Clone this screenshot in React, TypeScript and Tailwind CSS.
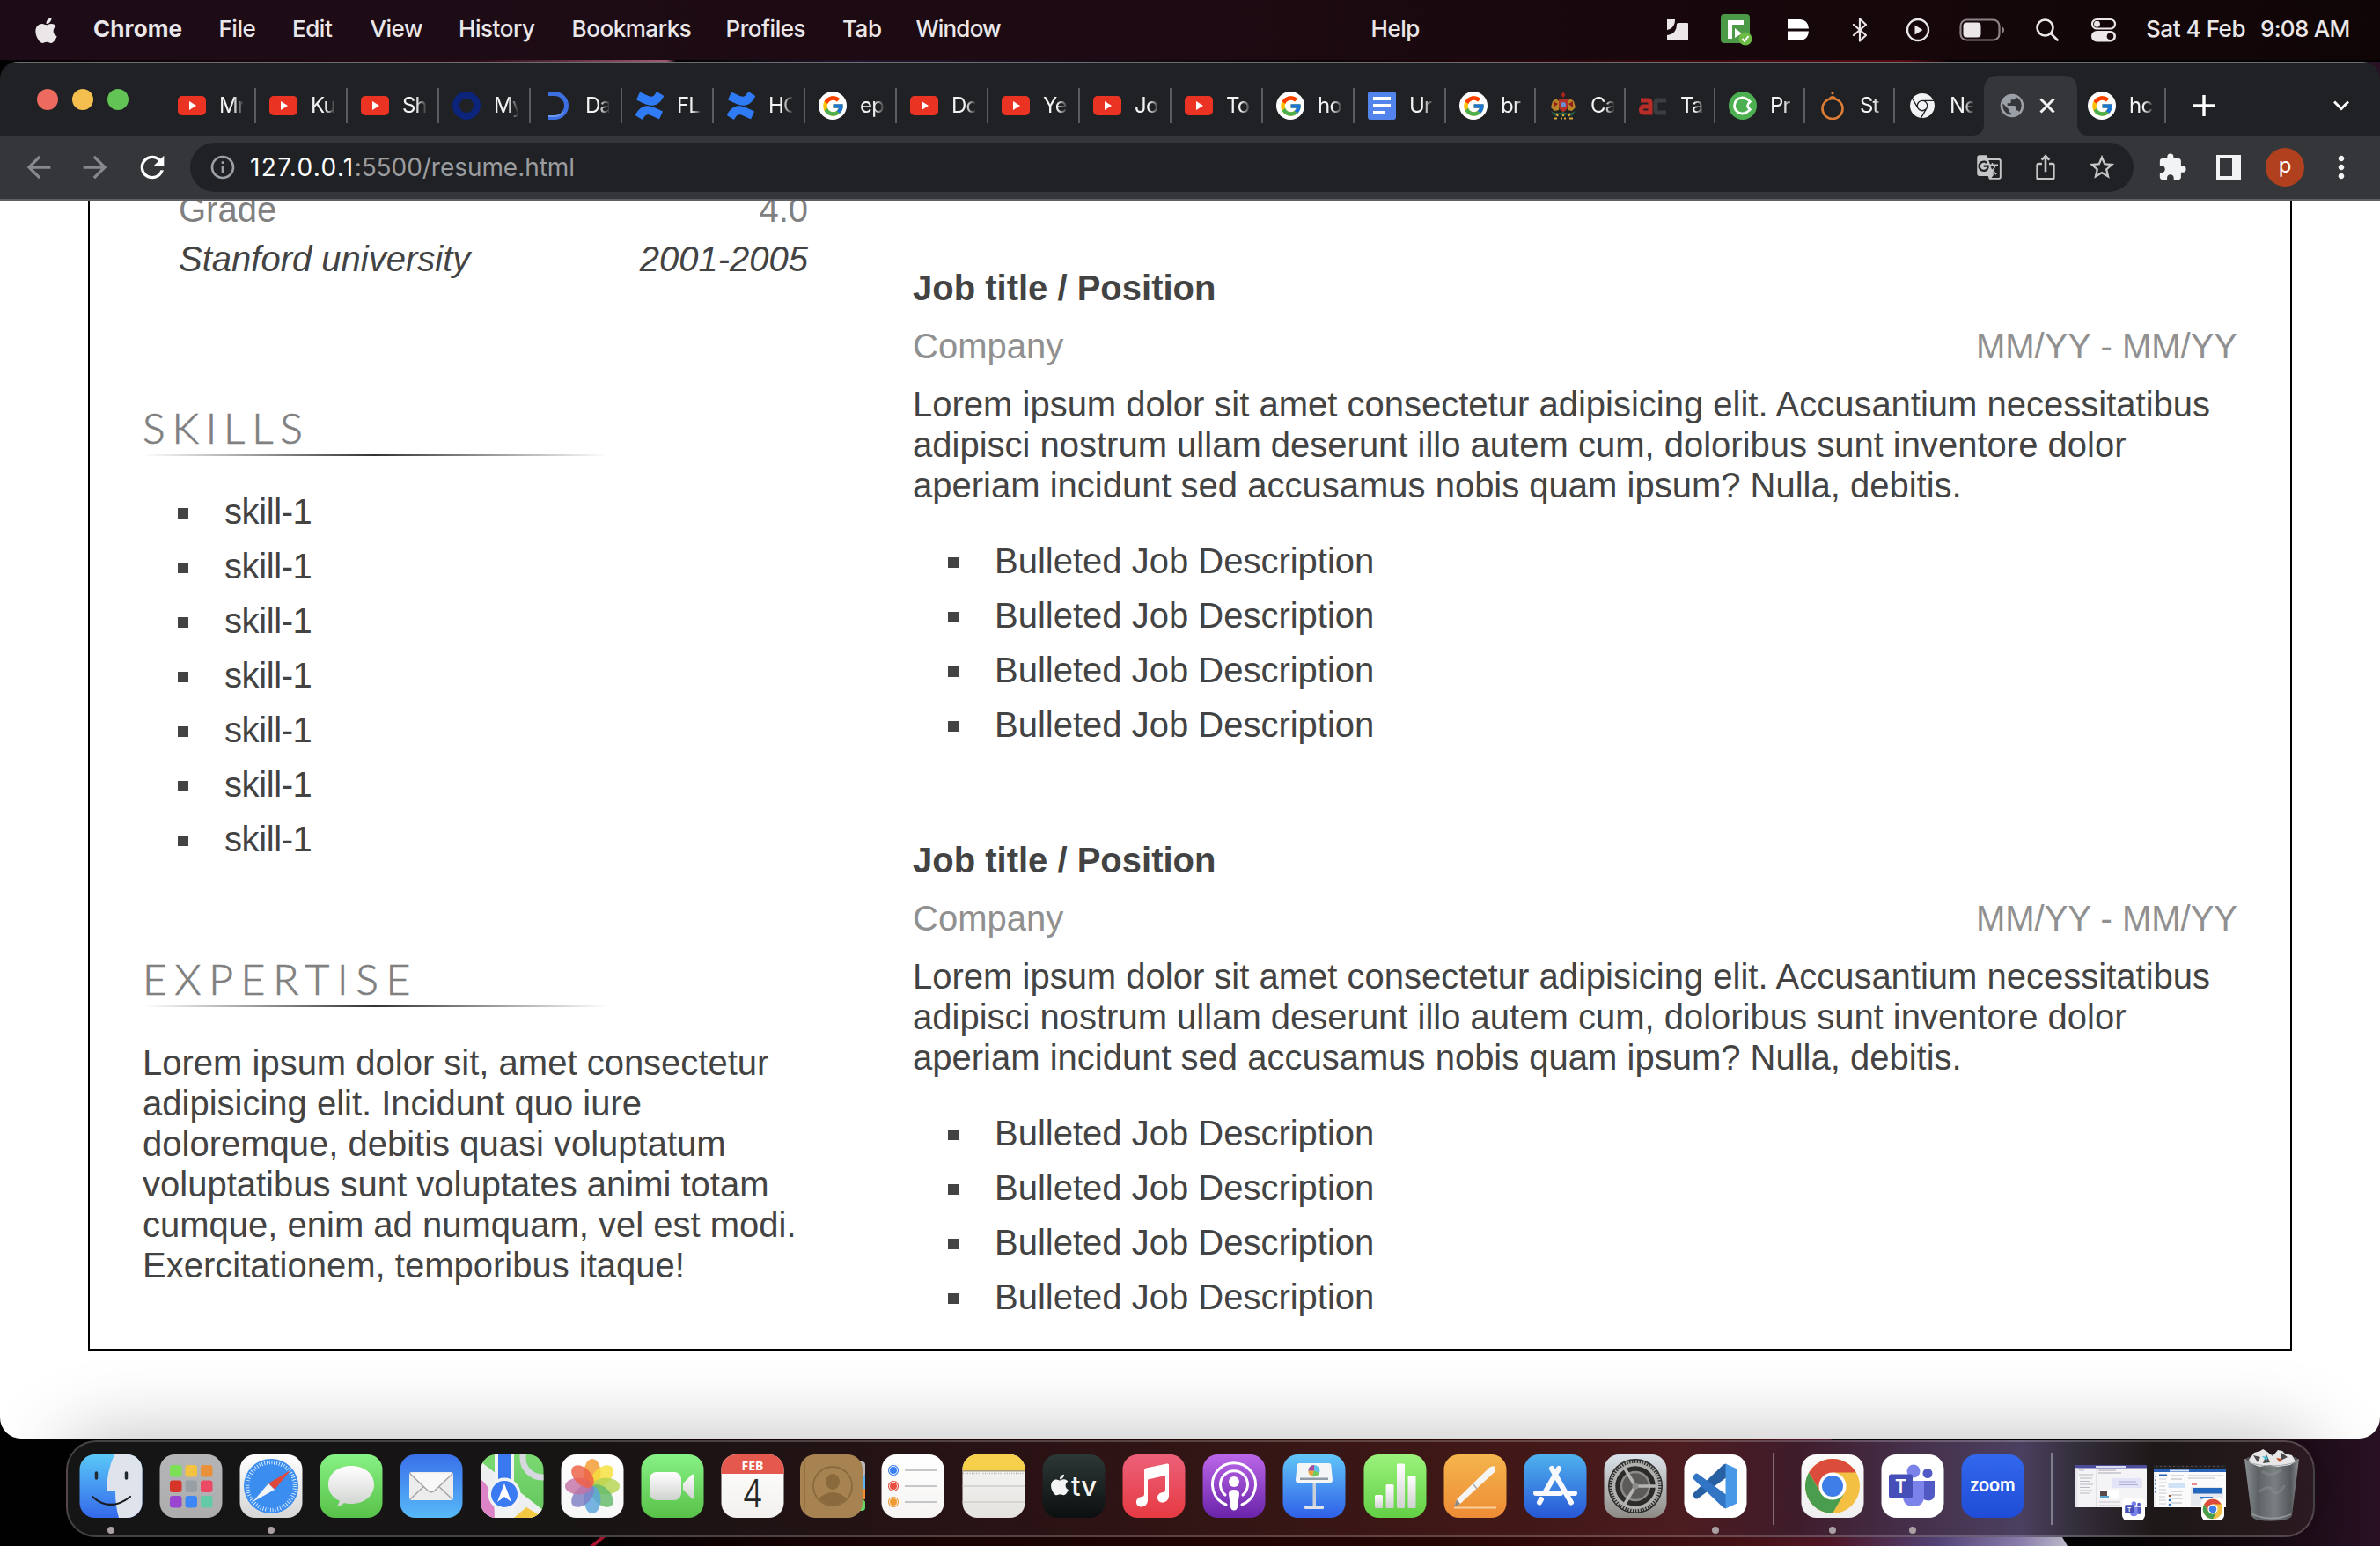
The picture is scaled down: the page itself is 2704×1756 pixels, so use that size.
import React from "react";
import { FaApple } from "react-icons/fa";
import { FcGoogle } from "react-icons/fc";
import { SiConfluence, SiGooglechrome } from "react-icons/si";
import {
  MdArrowBack,
  MdArrowForward,
  MdRefresh,
  MdInfoOutline,
  MdGTranslate,
  MdIosShare,
  MdStarBorder,
  MdExtension,
  MdMoreVert,
  MdPublic,
} from "react-icons/md";

/* ---------------------------------------------------------------- menu bar */

const menus = [
  { label: "File", cls: "w-[41px]" },
  { label: "Edit", cls: "w-[46px]" },
  { label: "View", cls: "w-[58px]" },
  { label: "History", cls: "w-[86px]" },
  { label: "Bookmarks", cls: "w-[132.5px]" },
  { label: "Profiles", cls: "w-[90px]" },
  { label: "Tab", cls: "w-[41px]" },
  { label: "Window", cls: "w-[96px] tracking-[-0.8px]" },
];

function MenuBar() {
  return (
    <div className="flex h-[68px] shrink-0 items-center bg-linear-to-r from-[#1d0c17] via-[#1d0a12] to-[#100506] font-['Inter'] text-[26px] font-medium tracking-[-0.45px] whitespace-nowrap text-[#ebe7e9]">
      <FaApple className="ml-[36px] h-[33px] w-[33px] shrink-0" />
      <div className="flex gap-[42.5px] pb-[3px]">
        <span className="ml-[37px] w-[100px] font-bold tracking-[0.1px]">Chrome</span>
        {menus.map((m) => (
          <span key={m.label} className={m.cls}>
            {m.label}
          </span>
        ))}
      </div>
      <span className="ml-[421px] pb-[3px]">Help</span>
      <div className="ml-auto flex items-center pr-[33px]">
        <svg className="mr-[36px] h-[26px] w-[26px]" viewBox="0 0 26 26" fill="#ebe7e9">
          <path d="M1 1h9q0 6-3 9-3 3-6 3zM12 6q1-1 3-1h9q1 0 1 1v18q0 1-1 1H2q-1 0-1-1v-5q7-1 9-5 2-3 2-8z" />
        </svg>
        <svg className="mr-[39px] h-[36px] w-[36px]" viewBox="0 0 36 36">
          <rect x="0" y="0" width="33" height="33" rx="4" fill="#4c9a48" />
          <path d="M8 28V7h18v5H13v16z" fill="#fff" />
          <path d="M16 16l8 6-8 5z" fill="#fff" />
          <circle cx="28" cy="28" r="7.5" fill="#6dbb45" />
          <path d="M24.500 28l2.500 3 4.500-6" stroke="#fff" strokeWidth="2" fill="none" />
        </svg>
        <svg className="mr-[46px] h-[26px] w-[26px]" viewBox="0 0 26 26" fill="#fff">
          <path d="M1 1h14q9 0 10 10.500H1zM1 14.500h24Q24 25 15 25H1z" />
        </svg>
        <svg className="mr-[41px] h-[28px] w-[22px]" viewBox="0 0 22 28" fill="none" stroke="#ebe7e9" strokeWidth="2.200" strokeLinejoin="round" strokeLinecap="round">
          <path d="M4 8l14 12-7 6.500v-25L18 8 4 20" />
        </svg>
        <svg className="mr-[33px] h-[28px] w-[28px]" viewBox="0 0 28 28">
          <circle cx="14" cy="14" r="12" fill="none" stroke="#ebe7e9" strokeWidth="2.400" />
          <path d="M10.500 8.500l9 5.500-9 5.500z" fill="#ebe7e9" />
        </svg>
        <svg className="mr-[34px] h-[26px] w-[52px]" viewBox="0 0 52 26">
          <rect x="1.500" y="1.500" width="44" height="23" rx="7" fill="none" stroke="#8d8286" strokeWidth="2.200" />
          <rect x="4.500" y="4.500" width="20" height="17" rx="4" fill="#ebe7e9" />
          <path d="M48 9v8q3-1 3-4t-3-4z" fill="#8d8286" />
        </svg>
        <svg className="mr-[35px] h-[28px] w-[28px]" viewBox="0 0 28 28" fill="none" stroke="#ebe7e9" strokeWidth="2.600" strokeLinecap="round">
          <circle cx="11.500" cy="11.500" r="9" />
          <path d="M18 18l7.500 7.500" />
        </svg>
        <svg className="mr-[33px] h-[28px] w-[30px]" viewBox="0 0 30 28">
          <rect x="2" y="2" width="26" height="10.500" rx="5.250" fill="none" stroke="#ebe7e9" strokeWidth="2.200" />
          <circle cx="7.500" cy="7.250" r="3.400" fill="#ebe7e9" />
          <rect x="1" y="15" width="28" height="12.500" rx="6.250" fill="#ebe7e9" />
          <circle cx="22.500" cy="21.250" r="3.800" fill="#1a070c" />
        </svg>
        <div className="flex pb-[3px]">
          <span className="w-[130px]">Sat 4 Feb</span>
          <span className="w-[103px] tracking-[-0.7px]">9:08 AM</span>
        </div>
      </div>
    </div>
  );
}

/* -------------------------------------------------------------- favicons */

function YouTube() {
  return (
    <svg className="h-8 w-8" viewBox="0 0 32 32">
      <rect x="0" y="5" width="32" height="22" rx="5" fill="#ea3323" />
      <path d="M13 11l8 5-8 5z" fill="#fff" />
    </svg>
  );
}
function Google() {
  return (
    <span className="flex h-8 w-8 items-center justify-center rounded-full bg-white">
      <FcGoogle className="h-[27px] w-[27px]" />
    </span>
  );
}
function Confluence() {
  return <SiConfluence className="h-8 w-8 text-[#2f7bf5]" />;
}
function Docs() {
  return (
    <svg className="h-8 w-8" viewBox="0 0 32 32">
      <rect width="32" height="32" rx="3" fill="#5384ec" />
      <path d="M6 6h20v4H6zM6 14h20v4H6zM6 22h13v4H6z" fill="#fff" />
    </svg>
  );
}
function BlueRing() {
  return (
    <svg className="h-8 w-8" viewBox="0 0 32 32">
      <circle cx="16" cy="16" r="12" fill="none" stroke="#0c2479" strokeWidth="8" />
    </svg>
  );
}
function BlueD() {
  return (
    <svg className="h-8 w-8" viewBox="0 0 32 32" fill="none">
      <path d="M5 2.500h7a13.500 13.500 0 0 1 0 27H5" stroke="#3e6fe0" strokeWidth="5" />
      <path d="M5 28h7a12 12 0 0 0 10-5" stroke="#6b9af2" strokeWidth="2" />
    </svg>
  );
}
function Crest() {
  return (
    <svg className="h-8 w-8" viewBox="0 0 32 32">
      <path d="M16 0l2.500 4-2.500 3-2.500-3z" fill="#a3251d" />
      <path d="M4 11l4-3 4 4-1 9-5 1-4-4z" fill="#b98427" />
      <path d="M28 11l-4-3-4 4 1 9 5 1 4-4z" fill="#b98427" />
      <path d="M5 11l5 3-5 4zM27 11l-5 3 5 4z" fill="#8f2019" />
      <path d="M11 8h10v9q-1 5-5 6-4-1-5-6z" fill="#b3312a" />
      <circle cx="16" cy="15" r="3" fill="#6a8fd0" />
      <path d="M2 22q6 4 14 1 8 3 14-1l-3 5-4 1-3-2-4 3-4-3-3 2-4-1z" fill="#27583f" />
      <path d="M8 25l2 3M16 25v3M24 25l-2 3M5 30.500h4M13 30.500h2M17 30.500h2M23 30.500h4" stroke="#d9a83a" strokeWidth="2" />
    </svg>
  );
}
function AcLogo() {
  return (
    <svg className="h-8 w-8" viewBox="0 0 32 32" fill="none" strokeWidth="5">
      <path d="M2 10h8q3 0 3 3v11H5q-2.500 0-2.500-3.200T5 17h7" stroke="#b92d29" />
      <path d="M31 10h-9q-3 0-3 3v8q0 3 3 3h9" stroke="#3c3d40" />
    </svg>
  );
}
function GreenC() {
  return (
    <svg className="h-8 w-8" viewBox="0 0 32 32">
      <circle cx="16" cy="16" r="16" fill="#4caf50" />
      <path d="M20.500 8.500A9 9 0 1 0 20.500 23.500L24.500 20.500Q18.500 16 24.500 11.500Z" fill="none" stroke="#fff" strokeWidth="2.800" strokeLinejoin="round" />
    </svg>
  );
}
function OrangeRing() {
  return (
    <svg className="h-8 w-8" viewBox="0 0 32 32" fill="none" stroke="#dd7d35">
      <circle cx="16" cy="19.500" r="11.500" strokeWidth="2.600" />
      <path d="M12.500 8q3.500-4 7 0" strokeWidth="2" />
      <circle cx="16" cy="1.800" r="1.600" fill="#dd7d35" stroke="none" />
    </svg>
  );
}
function ChromeMono() {
  return (
    <span className="flex h-8 w-8 items-center justify-center">
      <SiGooglechrome className="h-7 w-7 text-[#f1f3f4]" />
    </span>
  );
}

const tabs: { icon: () => React.ReactElement; text: string }[] = [
  { icon: YouTube, text: "Mr" },
  { icon: YouTube, text: "Ku" },
  { icon: YouTube, text: "Sh" },
  { icon: BlueRing, text: "My" },
  { icon: BlueD, text: "Da" },
  { icon: Confluence, text: "FL" },
  { icon: Confluence, text: "HC" },
  { icon: Google, text: "ep" },
  { icon: YouTube, text: "Dc" },
  { icon: YouTube, text: "Ye" },
  { icon: YouTube, text: "Jo" },
  { icon: YouTube, text: "To" },
  { icon: Google, text: "ho" },
  { icon: Docs, text: "Ur" },
  { icon: Google, text: "br" },
  { icon: Crest, text: "Ca" },
  { icon: AcLogo, text: "Ta" },
  { icon: GreenC, text: "Pr" },
  { icon: OrangeRing, text: "St" },
  { icon: ChromeMono, text: "Ne" },
];

function TabItem({ icon: Icon, text, width, line }: { icon: () => React.ReactElement; text: string; width: string; line: boolean }) {
  return (
    <div className={"flex h-full shrink-0 items-center " + width}>
      <span className="ml-[15px] shrink-0">
        <Icon />
      </span>
      <span className="ml-[15px] w-[27px] overflow-hidden mask-r-from-60% mask-r-to-105% text-[24px] leading-[34px] tracking-[-0.8px] text-[#f1f3f4]">{text}</span>
      <span className={line ? "ml-auto h-10 w-[2px] bg-[#5b5c5f]" : "ml-auto"} />
    </div>
  );
}

function TabStrip() {
  return (
    <div className="flex h-[84px] items-end border-t-2 border-[#6c6d6f] bg-[#202124] font-['Inter']">
      <div className="flex h-[68px] w-full items-center">
        <div className="mb-[14px] ml-[42px] flex w-[145px] shrink-0 gap-4">
          <span className="h-6 w-6 rounded-full bg-[#ec6a5e]" />
          <span className="h-6 w-6 rounded-full bg-[#f4bf4f]" />
          <span className="h-6 w-6 rounded-full bg-[#61c454]" />
        </div>
        {tabs.map((t, i) => (
          <TabItem key={i} icon={t.icon} text={t.text} width={i < 14 ? "w-[104px]" : "w-[102px]"} line={i < 19} />
        ))}
        <div className="relative flex h-full w-[102px] shrink-0 items-center">
          <svg className="absolute top-0 -left-[15px] h-[68px] w-[134px]" viewBox="0 0 134 68">
            <path d="M0 68q14 0 14-14V16Q14 0 30 0h74q16 0 16 16v38q0 14 14 14z" fill="#35363a" />
          </svg>
          <MdPublic className="relative ml-[15px] h-8 w-8 text-[#9aa0a6]" />
          <svg className="relative ml-[15px] h-[18px] w-[18px]" viewBox="0 0 18 18" stroke="#f1f3f4" strokeWidth="3">
            <path d="M1.500 1.500l15 15M16.500 1.500l-15 15" />
          </svg>
        </div>
        <TabItem icon={Google} text="hc" width="w-[104px]" line />
        <svg className="ml-[30px] h-[26px] w-[26px] shrink-0" viewBox="0 0 26 26" stroke="#fff" strokeWidth="3.400">
          <path d="M13 1v24M1 13h24" />
        </svg>
        <svg className="mr-[35px] ml-auto h-[12px] w-[18px] shrink-0" viewBox="0 0 18 12" fill="none" stroke="#fff" strokeWidth="3">
          <path d="M1 1.500l8 8 8-8" />
        </svg>
      </div>
    </div>
  );
}

function Toolbar() {
  return (
    <div className="flex h-[74px] items-center border-b-2 border-[#5f6063] bg-[#35363a] font-['Inter']">
      <MdArrowBack className="ml-[24px] h-10 w-10 text-[#87898c]" />
      <MdArrowForward className="ml-[24px] h-10 w-10 text-[#87898c]" />
      <MdRefresh className="ml-[25px] h-10 w-10 text-white" />
      <div className="ml-[23px] flex h-14 w-[2208px] items-center rounded-full bg-[#202124] text-[28px]">
        <MdInfoOutline className="ml-[21px] h-8 w-8 text-[#9aa0a6]" />
        <span className="ml-[15px] tracking-[1.35px] text-white">127.0.0.1</span>
        <span className="tracking-[-0.05px] text-[#9a9c9f]">:5500/resume.html</span>
        <MdGTranslate className="ml-auto h-[30px] w-[30px] text-[#c4c6c8]" />
        <MdIosShare className="ml-[33px] h-[32px] w-[32px] text-[#c4c6c8]" />
        <MdStarBorder className="mr-[19px] ml-[31px] h-[34px] w-[34px] text-[#c4c6c8]" />
      </div>
      <MdExtension className="ml-[27px] h-[34px] w-[34px] text-[#f1f3f4]" />
      <svg className="ml-[33px] h-7 w-7" viewBox="0 0 28 28">
        <path fillRule="evenodd" d="M0 0h28v28H0zM4 4v20h14V4z" fill="#f1f3f4" />
      </svg>
      <span className="ml-7 flex h-11 w-11 items-center justify-center rounded-full bg-[#b0401e] pb-1 text-[24px] text-white">p</span>
      <MdMoreVert className="ml-[22px] h-10 w-10 text-[#f1f3f4]" />
    </div>
  );
}

/* ---------------------------------------------------------------- resume */

function Heading({ children, tracking }: { children: string; tracking: string }) {
  return (
    <div className="w-[528px]">
      <h2
        className={
          "h-[58px] font-['Lato'] text-[48px] leading-[55px] font-light text-[#808080] [-webkit-text-stroke:0.7px_#808080] " + tracking
        }
      >
        {children}
      </h2>
      <div className="h-[2px] bg-linear-to-r from-transparent via-[#333] to-transparent" />
    </div>
  );
}

function Bullets({ items, className }: { items: string[]; className: string }) {
  return (
    <ul className={"flex flex-col gap-4 " + className}>
      {items.map((item, i) => (
        <li key={i} className="flex items-center">
          <span className="mt-[3px] mr-[41px] h-3 w-3 bg-[#434343]" />
          {item}
        </li>
      ))}
    </ul>
  );
}

function Job({ className }: { className: string }) {
  return (
    <section className={className}>
      <h3 className="font-bold">Job title / Position</h3>
      <div className="mt-5 flex justify-between text-[#909090]">
        <span>Company</span>
        <span>MM/YY - MM/YY</span>
      </div>
      <p className="mt-5 whitespace-nowrap">
        Lorem ipsum dolor sit amet consectetur adipisicing elit. Accusantium necessitatibus
        <br />
        adipisci nostrum ullam deserunt illo autem cum, doloribus sunt inventore dolor
        <br />
        aperiam incidunt sed accusamus nobis quam ipsum? Nulla, debitis.
      </p>
      <Bullets
        className="mt-10 pl-[40px]"
        items={["Bulleted Job Description", "Bulleted Job Description", "Bulleted Job Description", "Bulleted Job Description"]}
      />
    </section>
  );
}

function Resume() {
  return (
    <div className="h-[1406px] overflow-hidden bg-white">
      <div className="mx-[100px] flex h-[1306px] justify-between border-x-2 border-b-2 border-black pr-[60px] pl-[60px] font-['Liberation_Sans'] text-[40px] leading-[46px] text-[#434343]">
        <div className="w-[760px]">
          <div className="-mt-[13px] ml-[41px] flex w-[715px] flex-col gap-[10px]">
            <div className="flex justify-between text-[#808080]">
              <span>Grade</span>
              <span>4.0</span>
            </div>
            <div className="flex justify-between italic">
              <span>Stanford university</span>
              <span>2001-2005</span>
            </div>
          </div>
          <div className="mt-[141px]">
            <Heading tracking="tracking-[7.800px]">SKILLS</Heading>
          </div>
          <Bullets
            className="mt-10 pl-[40px] tracking-[-0.400px]"
            items={["skill-1", "skill-1", "skill-1", "skill-1", "skill-1", "skill-1", "skill-1"]}
          />
          <div className="mt-[108px]">
            <Heading tracking="tracking-[8.700px]">EXPERTISE</Heading>
          </div>
          <p className="mt-10 whitespace-nowrap">
            Lorem ipsum dolor sit, amet consectetur
            <br />
            adipisicing elit. Incidunt quo iure
            <br />
            doloremque, debitis quasi voluptatum
            <br />
            voluptatibus sunt voluptates animi totam
            <br />
            cumque, enim ad numquam, vel est modi.
            <br />
            Exercitationem, temporibus itaque!
          </p>
        </div>
        <div className="w-[1505px]">
          <Job className="mt-[76px]" />
          <Job className="mt-[108px]" />
        </div>
      </div>
    </div>
  );
}

/* ------------------------------------------------------------------ dock */

function Tile({ from, to, id, children }: { from: string; to: string; id: string; children?: React.ReactNode }) {
  return (
    <svg className="h-[72px] w-[72px]" viewBox="0 0 72 72">
      <defs>
        <linearGradient id={id} x1="0" y1="0" x2="0" y2="1">
          <stop offset="0" stopColor={from} />
          <stop offset="1" stopColor={to} />
        </linearGradient>
        <clipPath id={id + "-clip"}>
          <rect x="0.500" y="0" width="71" height="72" rx="17" />
        </clipPath>
        <linearGradient id={id + "-hi"} x1="0" y1="0" x2="0" y2="1">
          <stop offset="0" stopColor="#fff" />
          <stop offset="1" stopColor="#cfd2cf" />
        </linearGradient>
      </defs>
      <g clipPath={"url(#" + id + "-clip)"}>
        <rect width="72" height="72" fill={"url(#" + id + ")"} />
        {children}
      </g>
    </svg>
  );
}

function Finder() {
  return (
    <Tile id="finder" from="#5ac8f8" to="#3468ea">
      <path d="M40 0Q31 20 31 42h10q0 16 4 30h27V0z" fill="#dfe4ec" />
      <path d="M19.500 21v6M53.500 21v6" stroke="#1f2a33" strokeWidth="3.500" strokeLinecap="round" />
      <path d="M15 48q20 18 43 0" stroke="#1b1b1f" strokeWidth="2.200" fill="none" strokeLinecap="round" />
    </Tile>
  );
}
function Launchpad() {
  const c = ["#7be055", "#f3c23f", "#e8903a", "#d8352a", "#98a0a5", "#ec4a64", "#9a45cf", "#3c86f5", "#63c9a6"];
  return (
    <Tile id="launch" from="#b4b5b7" to="#adadae">
      {c.map((f, i) => (
        <rect key={i} x={12 + (i % 3) * 17.5} y={12 + Math.floor(i / 3) * 17.5} width="13.500" height="13.500" rx="3" fill={f} />
      ))}
    </Tile>
  );
}
function Safari() {
  return (
    <Tile id="safari" from="#ffffff" to="#d6d6d6">
      <circle cx="36" cy="36" r="31" fill="#3b8df0" />
      <circle cx="36" cy="36" r="27" fill="none" stroke="#e4f1fd" strokeWidth="4.500" strokeDasharray="0.900 1.930" />
      <path d="M58 18L40 40l-7-7z" fill="#e0483c" />
      <path d="M15 54l18-21 7 7z" fill="#f3f5f7" />
    </Tile>
  );
}
function Messages() {
  return (
    <Tile id="msg" from="#87f285" to="#58c148">
      <path d="M36 13c15 0 26 9 26 21.500S51 56 36 56c-3 0-6-.4-8-1-2 2-5 4-9 4.500 2-2 3.500-4 3.500-7C14 48.500 10 42 10 34.500 10 22 21 13 36 13z" fill="url(#msg-hi)" />
    </Tile>
  );
}
function Mail() {
  return (
    <Tile id="mail" from="#3a70ea" to="#57b9f8">
      <rect x="11" y="20" width="50" height="32" rx="3" fill="#ececec" />
      <path d="M12 51l18-17M60 51L42 34" stroke="#a5a5a5" strokeWidth="1.500" />
      <path d="M11.500 21.500L32 41q4 3.500 8 0l20.500-19.500" fill="#f8f8f8" stroke="#a5a5a5" strokeWidth="1.500" />
    </Tile>
  );
}
function Maps() {
  return (
    <Tile id="maps" from="#7bd972" to="#62c65c">
      <path d="M0 8l72 56v8H0z" fill="#eeeff1" />
      <path d="M0 28q16 12 16 44H0z" fill="#dc84c6" />
      <path d="M72 72H38l14-12z" fill="#f3c843" />
      <circle cx="70" cy="4" r="22" fill="none" stroke="#d7d8df" strokeWidth="7" />
      <path d="M16 0h22v72H16z" fill="#f1f2f4" />
      <path d="M20 0h15v36H20z" fill="#3a78ef" />
      <circle cx="27" cy="45" r="18.500" fill="#f1f2f4" />
      <circle cx="27" cy="45" r="15" fill="#3a7af2" />
      <path d="M27 33l8 21-8-6-8 6z" fill="#fff" />
    </Tile>
  );
}
function Photos() {
  const c = ["#f39a2f", "#f5de3c", "#b4d450", "#63b96a", "#5aa3dc", "#7f7fc4", "#c271a6", "#ee5f44"];
  return (
    <Tile id="photos" from="#ffffff" to="#f6f6f6">
      {c.map((f, i) => (
        <ellipse key={i} cx="36" cy="20.500" rx="9.500" ry="15.500" fill={f} opacity="0.820" transform={"rotate(" + i * 45 + " 36 36)"} />
      ))}
    </Tile>
  );
}
function FaceTime() {
  return (
    <Tile id="ft" from="#87f285" to="#58c148">
      <rect x="10" y="20" width="36" height="32" rx="8" fill="url(#ft-hi)" />
      <path d="M48 33l10-10q2-1.500 2 1v25q0 2.500-2 1L48 40z" fill="url(#ft-hi)" />
    </Tile>
  );
}
function Calendar() {
  return (
    <Tile id="cal" from="#ffffff" to="#f2f1ee">
      <rect width="72" height="22" fill="#e4584d" />
      <text x="36" y="17.500" textAnchor="middle" fontFamily="Noto Sans" fontWeight="700" fontSize="14" fill="#fff">
        FEB
      </text>
      <text x="36" y="60" textAnchor="middle" fontFamily="Inter" fontWeight="300" fontSize="43" textLength="24" lengthAdjust="spacingAndGlyphs" fill="#262626">
        4
      </text>
    </Tile>
  );
}
function Contacts() {
  return (
    <svg className="h-[72px] w-[76px]" viewBox="0 0 76 72">
      <rect x="60" y="8" width="15" height="18" rx="4" fill="#b9b9bb" />
      <rect x="60" y="25" width="15" height="14" fill="#5ab3f5" />
      <rect x="60" y="39" width="15" height="12" fill="#f08f2c" />
      <rect x="60" y="51" width="15" height="13" rx="4" fill="#67d766" />
      <rect x="1" y="0" width="71" height="72" rx="17" fill="#a78351" />
      <path d="M6 8v56" stroke="#8e6d40" strokeWidth="1.500" />
      <circle cx="38" cy="36" r="22" fill="none" stroke="#8a6a3d" strokeWidth="1.800" />
      <ellipse cx="38" cy="31" rx="8" ry="9" fill="#8a6a3d" />
      <path d="M22 50q16-14 32 0-16 15-32 0z" fill="#8a6a3d" />
    </svg>
  );
}
function Reminders() {
  return (
    <Tile id="rem" from="#ffffff" to="#f5f4f2">
      {["#3b7ff5", "#e84f42", "#ee9a37"].map((f, i) => (
        <g key={f}>
          <circle cx="14" cy={18 + i * 18} r="4" fill={f} />
          <circle cx="14" cy={18 + i * 18} r="5.500" fill="none" stroke={f} strokeWidth="1.200" />
          <path d={"M27 " + (18 + i * 18) + "h37"} stroke="#b6b6ba" strokeWidth="1.500" />
        </g>
      ))}
    </Tile>
  );
}
function Notes() {
  return (
    <Tile id="notes" from="#f9f9f8" to="#e3e2de">
      <rect width="72" height="18" fill="#f6cf4b" />
      <rect y="18" width="72" height="1.500" fill="#a79a78" />
      <path d="M1 21.500h71" stroke="#b3b1ac" strokeWidth="1.500" strokeDasharray="1 1.500" />
      <path d="M0 36h72M0 54h72" stroke="#cfcecb" strokeWidth="1.300" />
    </Tile>
  );
}
function AppleTv() {
  return (
    <Tile id="tv" from="#2c3836" to="#0c0f10">
      <FaApple size={27} x="6.500" y="21" color="#f4f4f4" />
      <text x="33" y="47" fontFamily="Inter" fontWeight="500" fontSize="30" fill="#f4f4f4" textLength="29" lengthAdjust="spacingAndGlyphs">
        tv
      </text>
    </Tile>
  );
}
function Music() {
  return (
    <Tile id="music" from="#ec6079" to="#e63a42">
      <path d="M25 18q0-2 2-2.500l24-5q2-.5 2 1.500v35c0 5-4 7.500-7.500 7.500S40 52 40 49s2.500-5.500 6-6c2-.3 3-.8 3-3V24l-20 4.500V52c0 5-4 7.500-7.500 7.500S16 57 16 54s2.500-5.500 6-6c2-.3 3-.8 3-3z" fill="#fff" />
    </Tile>
  );
}
function Podcasts() {
  return (
    <Tile id="pod" from="#bb66e8" to="#6a23a9">
      <g fill="none" stroke="#fff" strokeWidth="3" strokeLinecap="round">
        <path d="M27 57A24.500 24.500 0 1 1 45 57" />
        <path d="M26 46A15.500 15.500 0 1 1 46 46" />
      </g>
      <circle cx="36" cy="31" r="6" fill="#fff" />
      <path d="M36 40q6 0 6 5l-2 15q-1 3.500-4 3.500T32 60l-2-15q0-5 6-5z" fill="#fff" />
    </Tile>
  );
}
function Keynote() {
  return (
    <Tile id="key" from="#62c6f8" to="#2f60e8">
      <path d="M34.500 32h3.500v27h-3.500z" fill="#c9d0d8" />
      <rect x="25" y="58" width="22" height="4" rx="1.500" fill="#dfe3e8" />
      <path d="M19 10h34q2 0 2.300 2L57 29q0 3-2.500 3h-37Q15 32 15 29l1.700-17Q17 10 19 10z" fill="#f3f5f7" />
      <rect x="20" y="26.500" width="32" height="2.500" fill="#8f9aa6" />
      <circle cx="36" cy="18.500" r="6.500" fill="#5cc0e8" />
      <path d="M36 18.500V12a6.500 6.500 0 0 0-6.500 6.500z" fill="#b0489a" />
      <path d="M36 18.500h-6.500A6.500 6.500 0 0 0 34 25z" fill="#f0a23a" />
      <path d="M36 18.500L34 25a6.500 6.500 0 0 0 8-4z" fill="#7ac75a" />
    </Tile>
  );
}
function Numbers() {
  return (
    <Tile id="num" from="#9bf27b" to="#62d045">
      <rect x="13" y="46" width="9" height="15" rx="1.500" fill="url(#num-hi)" />
      <rect x="25.500" y="34" width="9" height="27" rx="1.500" fill="url(#num-hi)" />
      <rect x="38" y="10.500" width="9" height="50.500" rx="1.500" fill="url(#num-hi)" />
      <rect x="50.500" y="24" width="9" height="37" rx="1.500" fill="url(#num-hi)" />
    </Tile>
  );
}
function Pages() {
  return (
    <Tile id="pages" from="#f5b54c" to="#ed8b35">
      <path d="M12 60.500h48" stroke="#f9cf9c" strokeWidth="2.200" />
      <path d="M12 60l3-9 37-36q4-3 6-1t0 6L19 56z" fill="#f5f5f6" />
      <path d="M34 34l4 5" stroke="#a9a9ad" strokeWidth="1.500" />
      <path d="M12 60l3-9 4 5z" fill="#8b8782" />
    </Tile>
  );
}
function AppStore() {
  return (
    <Tile id="store" from="#4fb1ee" to="#2757d6">
      <g stroke="#f7f9fc" strokeWidth="6" strokeLinecap="round">
        <path d="M40 16L25 42" />
        <path d="M20 51l-2 3.500" />
        <path d="M32 16l22 38.500" />
        <path d="M14 44h28M53 44h5" />
      </g>
    </Tile>
  );
}
function Settings() {
  return (
    <Tile id="set" from="#dbe3ea" to="#8e8b86">
      <circle cx="36" cy="36" r="31" fill="#2c2b2a" />
      <circle cx="36" cy="36" r="27.500" fill="none" stroke="#a5a5a3" strokeWidth="4" strokeDasharray="1.600 1.280" />
      <circle cx="36" cy="36" r="24.500" fill="none" stroke="#b0b0ae" strokeWidth="3.500" />
      <circle cx="36" cy="36" r="16" fill="#5b5a58" stroke="#8b8b89" strokeWidth="2.500" />
      <path d="M36 36h23M36 36L24 16M36 36L24 56" stroke="#b5b5b3" strokeWidth="3.500" />
      <circle cx="36" cy="36" r="3.500" fill="#8b8b89" />
    </Tile>
  );
}
function VsCode() {
  return (
    <Tile id="vsc" from="#ffffff" to="#ffffff">
      <path d="M48 10.500v16L16 50q-1.500 1-3 0l-2.500-3q-1-1.500.500-3L45 11.500z" fill="#2860a4" />
      <path d="M48 61.500v-16L16 22q-1.500-1-3 0l-2.500 3q-1 1.500.5 3L45 60.500z" fill="#3275c4" />
      <path d="M47.500 10.500l12 5.500q1.500 1 1.500 2.500v35q0 1.500-1.500 2.500l-12 5.500z" fill="#4799e8" />
    </Tile>
  );
}
function ChromeLogo() {
  return (
    <g>
      <circle cx="36" cy="36" r="31" fill="#f3c044" />
      <path d="M36 20.500h26.850A31 31 0 0 0 9.150 20.500L23 44z" fill="#dc4c3c" />
      <path d="M9.150 20.500A31 31 0 0 0 36 67l13.420-23.250L36 51 22.580 43.750z" fill="#4a9d4e" />
      <circle cx="36" cy="36" r="15.500" fill="#fff" />
      <circle cx="36" cy="36" r="12" fill="#3f7ee8" />
    </g>
  );
}
function TeamsLogo() {
  return (
    <g>
      <circle cx="53" cy="21.500" r="5.500" fill="#5159c4" />
      <path d="M47 30h14v15q0 7-6.500 7.500-5 0-7.500-3z" fill="#5159c4" />
      <circle cx="37" cy="19" r="7.500" fill="#7b83eb" />
      <path d="M25 30h24v17q0 12-12 12T25 47z" fill="#7b83eb" />
      <rect x="9" y="22.500" width="27" height="27" rx="2.500" fill="#464eb8" />
      <text x="22.500" y="43.500" textAnchor="middle" fontFamily="Open Sans" fontWeight="600" fontSize="21" fill="#fff">
        T
      </text>
    </g>
  );
}
function ChromeApp() {
  return (
    <Tile id="chrome" from="#fbfbfb" to="#efefef">
      <ChromeLogo />
    </Tile>
  );
}
function Teams() {
  return (
    <Tile id="teams" from="#ffffff" to="#ffffff">
      <TeamsLogo />
    </Tile>
  );
}
function Zoom() {
  return (
    <Tile id="zoomapp" from="#3268ee" to="#1f4cd6">
      <text x="36" y="42" textAnchor="middle" fontFamily="Lato" fontWeight="700" fontSize="22.500" fill="#fff" textLength="51" lengthAdjust="spacingAndGlyphs">
        zoom
      </text>
    </Tile>
  );
}

function ThumbTeams() {
  return (
    <svg className="h-[66px] w-[90px]" viewBox="0 0 90 66">
      <rect x="4" y="2" width="82" height="48" fill="#f4f4f6" />
      <rect x="4" y="2" width="82" height="3.500" fill="#4b4d9b" />
      <rect x="28" y="3" width="34" height="2" fill="#dcdcf0" />
      <rect x="4" y="5.500" width="3.500" height="44.500" fill="#e6e6ec" />
      <path d="M9 8h6M9 13h16M10 17h14M10 20.500h12M10 24h15M10 27.500h11M10 31h14M10 34h12" stroke="#b9bac2" strokeWidth="1" />
      <path d="M28.500 6v44" stroke="#dcdce2" strokeWidth="0.800" />
      <path d="M31 8h20M31 11h26" stroke="#a8a9b3" strokeWidth="1" />
      <rect x="46" y="17" width="35" height="11" fill="#e3e4f7" />
      <path d="M54 21h20M54 24.500h22" stroke="#a5a8cc" strokeWidth="0.900" />
      <rect x="33" y="30" width="21" height="10.500" fill="#fff" />
      <rect x="33" y="31" width="8" height="9" fill="#594a48" />
      <rect x="33" y="37" width="10" height="3" fill="#5aa6cf" />
      <path d="M32 44h24M32 48h24" stroke="#bdbdc4" strokeWidth="0.900" />
      <rect x="58" y="39" width="26" height="26" rx="6" fill="#fff" />
      <svg x="58" y="39" width="26" height="26" viewBox="0 0 72 72">
        <TeamsLogo />
      </svg>
    </svg>
  );
}
function ThumbChrome() {
  return (
    <svg className="h-[66px] w-[90px]" viewBox="0 0 90 66">
      <rect x="4" y="2" width="82" height="48" fill="#fbfbfc" />
      <rect x="4" y="2" width="82" height="5" fill="#202226" />
      <path d="M6 3.500h78" stroke="#7d4a46" strokeWidth="0.800" strokeDasharray="2 3" />
      <rect x="4" y="7" width="82" height="3" fill="#2a62b8" />
      <rect x="22" y="7.500" width="22" height="2" fill="#d4e2f4" />
      <rect x="4" y="10" width="3" height="40" fill="#eceef2" />
      <path d="M5.500 14v20" stroke="#4f7fc7" strokeWidth="1" strokeDasharray="1.500 3" />
      <rect x="10" y="12.500" width="9" height="2" fill="#2a62b8" />
      <path d="M10 18h8M10 22h9M10 26h7M10 30h8M10 34h9M10 38h7M10 42h8M10 46h8" stroke="#c3c6cd" strokeWidth="0.900" />
      <rect x="20.500" y="23" width="19" height="5" fill="#cfe2f6" />
      <path d="M24 14h14M24 18h12M24 32h13M24 36h12M24 40h13M24 45h12" stroke="#a9adb6" strokeWidth="0.900" />
      <circle cx="22" cy="37" r="1.300" fill="#9a5a3a" />
      <circle cx="22" cy="42" r="1.300" fill="#2f6fc4" />
      <circle cx="22" cy="47" r="1.300" fill="#2f6fc4" />
      <path d="M43 14h40M43 17h30" stroke="#b4b7bf" strokeWidth="0.900" />
      <path d="M47 24h6" stroke="#d2453c" strokeWidth="1.200" />
      <rect x="46" y="27" width="37" height="22" fill="#e6e9ee" />
      <rect x="49" y="28" width="32" height="6.500" fill="#2468bd" />
      <rect x="57" y="38" width="14" height="2.500" fill="#2f78cc" />
      <rect x="58" y="39" width="26" height="26" rx="6" fill="#fff" />
      <svg x="58" y="39" width="26" height="26" viewBox="0 0 72 72">
        <ChromeLogo />
      </svg>
    </svg>
  );
}
function Trash() {
  return (
    <svg className="h-[84px] w-[66px]" viewBox="0 0 66 84">
      <defs>
        <linearGradient id="can" x1="0" y1="0" x2="1" y2="0">
          <stop offset="0" stopColor="#8a9094" />
          <stop offset="0.250" stopColor="#5e6265" />
          <stop offset="0.550" stopColor="#7a7f82" />
          <stop offset="0.850" stopColor="#56595c" />
          <stop offset="1" stopColor="#8a9094" />
        </linearGradient>
      </defs>
      <ellipse cx="33" cy="13" rx="30" ry="6" fill="#54585b" />
      <path d="M2 12q2 4 12 6 19 4 38 0 10-2 12-6l-8 64q-1 6-23 6.500T10 76z" fill="url(#can)" />
      <path d="M7 13l6-8 7-2 3-2 5 3 6 5 6-7 5 1 3 3 8 2 4 7-6 4-14 2-10-2-11 2-10-4z" fill="#e7e7e8" />
      <path d="M12 8l8 2-3 6zM27 7l4 9-8 1zM44 5l7 5-8 4z" fill="#4a4a4c" />
      <path d="M22 9l7 1-2 4z" fill="#3fc0d8" />
      <path d="M38 11l7 1-3 4z" fill="#c4532f" />
      <path d="M2.500 12q2 4 11.500 6 19 4 38 0 9.500-2 11.500-6" stroke="#a7acaf" strokeWidth="1" fill="none" />
      <path d="M22 26q10 8 22-2M18 50q12-10 16-2t14-6" stroke="#8f9598" strokeWidth="3" opacity="0.400" fill="none" />
      <path d="M11 75q22 9 44 0" stroke="#a5aaad" strokeWidth="1.500" fill="none" opacity="0.700" />
    </svg>
  );
}

const dockApps: { app: () => React.ReactElement; running?: boolean }[] = [
  { app: Finder, running: true },
  { app: Launchpad },
  { app: Safari, running: true },
  { app: Messages },
  { app: Mail },
  { app: Maps },
  { app: Photos },
  { app: FaceTime },
  { app: Calendar },
  { app: Contacts },
  { app: Reminders },
  { app: Notes },
  { app: AppleTv },
  { app: Music },
  { app: Podcasts },
  { app: Keynote },
  { app: Numbers },
  { app: Pages },
  { app: AppStore },
  { app: Settings },
  { app: VsCode, running: true },
];
const dockRecent: { app: () => React.ReactElement; running?: boolean }[] = [
  { app: ChromeApp, running: true },
  { app: Teams, running: true },
  { app: Zoom },
];

function DockItem({ app: App, running }: { app: () => React.ReactElement; running?: boolean }) {
  return (
    <div className="flex w-[91.2px] shrink-0 flex-col items-center">
      <App />
      <span className={running ? "mt-[10px] h-2 w-2 rounded-full bg-[#aaa0a4]" : "hidden"} />
    </div>
  );
}

function Dock() {
  return (
    <div className="relative mt-[2px] ml-[75px] flex h-[110px] w-[2555px] items-start rounded-[34px] border-2 border-white/20 bg-[linear-gradient(90deg,#151515_0%,#171414_22%,#1f1314_30%,#2a1214_43%,#361615_54%,#421817_65%,#4b1c20_72%,#3f1c2b_77%,#452f4a_82%,#4b4060_87%,#332e3a_89.500%,#1d1817_93%,#24181a_97%,#2c1a22_100%)] pt-[14px] pl-[3px] shadow-[0_0_90px_rgba(0,0,0,0.28)]">
      {dockApps.map((d, i) => (
        <DockItem key={i} {...d} />
      ))}
      <span className="mx-[19.500px] mt-[-2px] h-[82px] w-[2px] bg-white/35" />
      {dockRecent.map((d, i) => (
        <DockItem key={i} {...d} />
      ))}
      <span className="mt-[-2px] mr-[21px] ml-[20px] h-[82px] w-[2px] bg-white/35" />
      <div className="mt-[10px] flex">
        <ThumbTeams />
        <ThumbChrome />
      </div>
      <div className="mt-[-7px] ml-[15px]">
        <Trash />
      </div>
    </div>
  );
}

function WallpaperStreak() {
  return (
    <svg className="h-[10px] w-full" viewBox="0 0 2704 10" preserveAspectRatio="none">
      <defs>
        <linearGradient id="glow" x1="0" y1="0" x2="1" y2="0">
          <stop offset="0" stopColor="#5a1a2c" />
          <stop offset="0.450" stopColor="#5d4c86" />
          <stop offset="0.800" stopColor="#9d8fc4" />
          <stop offset="1" stopColor="#d8d3e6" />
        </linearGradient>
      </defs>
      <path d="M670 10L682 0h6l-12 10z" fill="#c01636" />
      <path d="M2080 10V0h263l6 10z" fill="url(#glow)" />
    </svg>
  );
}

export default function App() {
  return (
    <div className="flex h-[1756px] w-[2704px] flex-col overflow-hidden bg-[linear-gradient(90deg,#020202_0%,#040202_25%,#1a0304_34%,#2a0605_60%,#4d1418_73%,#5a1a2c_76.900%,#0a0406_77%,#040304_87%,#0c0509_92%,#2a1224_100%)]">
      <MenuBar />
      <div className="h-[2px] shrink-0 bg-[linear-gradient(90deg,#050204_0%,#2b0a14_20%,#a05a78_28%,#020202_28.400%,#20162c_36%,#0c0306_55%,#5a0a14_80%,#050203_82%)]" />
      <div className="shrink-0 overflow-hidden rounded-t-[20px] rounded-b-[24px]">
        <TabStrip />
        <Toolbar />
        <Resume />
      </div>
      <Dock />
      <WallpaperStreak />
    </div>
  );
}
